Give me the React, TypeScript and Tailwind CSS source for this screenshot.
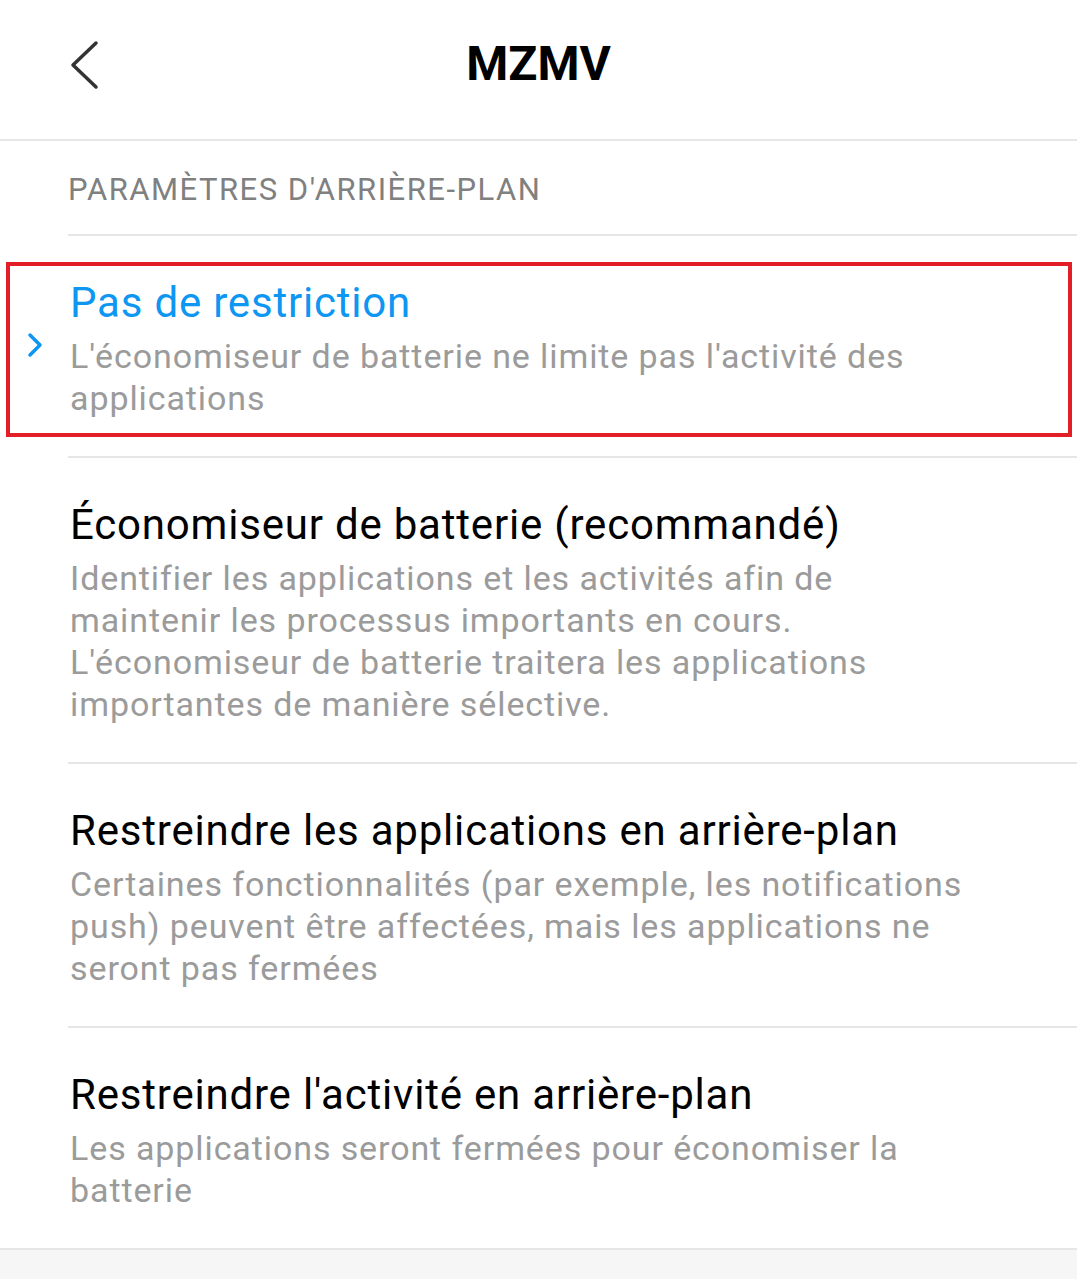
const options = [
    {
        title: 'Pas de restriction',
        desc: "L'économiseur de batterie ne limite pas l'activité des applications",
        selected: true,
    },
    {
        title: 'Économiseur de batterie (recommandé)',
        desc: "Identifier les applications et les activités afin de maintenir les processus importants en cours. L'économiseur de batterie traitera les applications importantes de manière sélective.",
        selected: false,
    },
    {
        title: 'Restreindre les applications en arrière-plan',
        desc: 'Certaines fonctionnalités (par exemple, les notifications push) peuvent être affectées, mais les applications ne seront pas fermées',
        selected: false,
    },
    {
        title: "Restreindre l'activité en arrière-plan",
        desc: 'Les applications seront fermées pour économiser la batterie',
        selected: false,
    },
];

export default function App() {
    return (
        <div className="min-h-[1279px] w-[1077px] bg-[#f6f6f6] font-['Roboto',_'Liberation_Sans',_sans-serif]">
            <div className="bg-white">
                <div className="relative flex h-[139px] items-center justify-center">
                    <svg className="absolute left-[60px] top-[30px]" width="50" height="70" viewBox="0 0 50 70">
                        <path d="M36 13 L13 35 L36 57" fill="none" stroke="#333" strokeWidth="3.5" strokeLinecap="round" strokeLinejoin="round" />
                    </svg>
                    <h1 className="mt-[-12px] text-[48px] font-bold text-black">MZMV</h1>
                </div>
                <div className="h-[2px] bg-[#e6e6e6]" />

                <div className="pl-[68px]">
                    <div className="flex h-[93px] items-center pt-[5px] text-[31px] tracking-[1.5px] text-[#808080]">
                        PARAMÈTRES D'ARRIÈRE-PLAN
                    </div>
                    {options.map((o, i) => (
                        <div key={i}>
                            <div className="h-[2px] bg-[#e6e6e6]" />
                            <div className="relative pt-[35px] pb-[37px] pr-[90px]">
                                {o.selected && (
                                    <svg className="absolute left-[-44px] top-[95px]" width="22" height="30" viewBox="0 0 22 30">
                                        <path d="M6 4 L16 14 L6 24" fill="none" stroke="#0d96f2" strokeWidth="3.5" strokeLinecap="round" strokeLinejoin="round" />
                                    </svg>
                                )}
                                <div className={`pl-[2px] text-[42px] leading-[64px] tracking-[0.8px] ${o.selected ? 'text-[#0d96f2]' : 'text-black'}`}>
                                    {o.title}
                                </div>
                                <p className="pl-[2px] text-[34px] leading-[42px] tracking-[0.9px] text-[#9b9b9b]">{o.desc}</p>
                            </div>
                        </div>
                    ))}
                </div>
                <div className="h-[2px] bg-[#e6e6e6]" />
            </div>

            {/* red highlight frame from the screenshot */}
            <div className="pointer-events-none absolute left-[6px] top-[262px] h-[175px] w-[1066px] border-[4px] border-[#e41e26]" />
        </div>
    );
}
